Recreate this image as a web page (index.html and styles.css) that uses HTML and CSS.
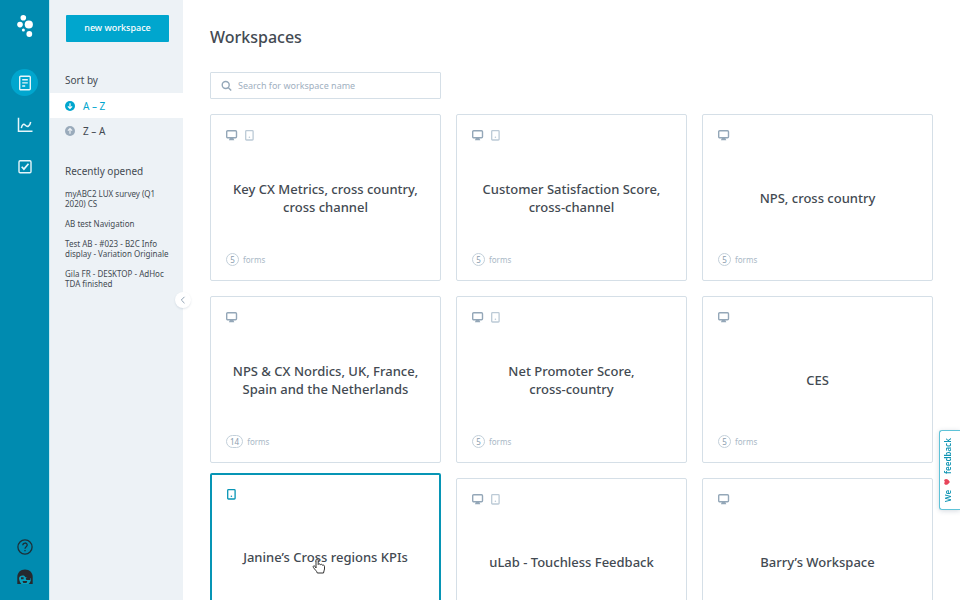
FILE: index.html
```html
<!DOCTYPE html>
<html lang="en">
<head>
  <meta charset="UTF-8" />
  <meta name="viewport" content="width=device-width, initial-scale=1" />
  <title>Workspaces</title>
  <link rel="stylesheet" href="styles.css">
</head>
<body>
  <!-- shared icons -->
  <svg class="sprite" aria-hidden="true">
    <symbol id="desktop" viewBox="0 0 12 12">
      <rect x=".7" y="1.7" width="9.8" height="7" rx="1" fill="none" stroke="currentColor" stroke-width="1.4" />
      <path d="M4 8.7h3.200l1.100 2.500H2.900z" fill="currentColor" />
    </symbol>
    <symbol id="mobile" viewBox="0 0 12 12">
      <rect x="1.7" y="1.6" width="7.4" height="9.4" rx=".8" fill="none" stroke="currentColor" stroke-width="1.3" />
      <circle cx="5.4" cy="8.3" r=".8" fill="currentColor" />
    </symbol>
  </svg>

  <div class="app">
    <nav class="rail" aria-label="Main">
      <a href="#" class="logo" aria-label="Home">
        <svg width="18" height="24" viewBox="0 0 18 24" fill="#fff">
          <circle cx="7.3" cy="3.8" r="2.8" />
          <circle cx="4" cy="10.6" r="2.8" />
          <circle cx="12.8" cy="10.5" r="4.1" />
          <circle cx="7.4" cy="16" r="1.5" />
          <circle cx="13.3" cy="20" r="2.9" />
        </svg>
      </a>
      <div class="rail-links">
        <a href="#" class="rail-link active" aria-label="Workspaces">
          <svg width="16" height="16" viewBox="0 0 16 16" fill="none" stroke="currentColor" stroke-width="1.4">
            <rect x="2.7" y="1.2" width="10.6" height="13.6" rx="1" />
            <path d="M5.2 4.7h5.6M5.2 7.9h5.6M5.2 11h3" />
          </svg>
        </a>
        <a href="#" class="rail-link" aria-label="Analytics">
          <svg width="16" height="16" viewBox="0 0 16 16" fill="none" stroke="currentColor" stroke-width="1.5">
            <path d="M1.5 .8v13.5H15.5" />
            <path d="M4.3 11.2C5.2 6.6 7 6.8 8.4 8.3c1.8 1.8 4.3 1.7 5.3-3.3" />
          </svg>
        </a>
        <a href="#" class="rail-link" aria-label="Tasks">
          <svg width="16" height="16" viewBox="0 0 16 16" fill="none" stroke="currentColor">
            <rect x="2" y="1.7" width="12" height="12" rx="1.2" stroke-width="1.4" />
            <path d="M4.7 7.7l2.2 2.4 4.6-5.4" stroke-width="1.7" />
          </svg>
        </a>
      </div>
      <div class="rail-bottom">
        <a href="#" aria-label="Help">
          <svg width="16" height="16" viewBox="0 0 16 16" fill="none" stroke="#1d2f38" stroke-width="1.3">
            <circle cx="8" cy="8" r="7.1" />
            <path d="M5.8 6.3c0-3 4.4-3 4.4-.2 0 1.6-2.2 1.6-2.2 3.6" />
            <path d="M8 10.9v1.4" />
          </svg>
        </a>
        <a href="#" aria-label="Profile">
          <svg width="16" height="16" viewBox="0 0 16 16">
            <path d="M.3 15V8C.3 3.5 3.5.5 8 .5s7.700 3 7.700 7.500v7z" fill="#26292e" />
            <path d="M2 9.300c.5-2.300 2.300-3.300 5.300-2.600.8 2 3.400 2.600 6.700 2.600.2 2.500-1 4.500-2.500 5.700h-7C2.800 13.500 2.200 11.500 2 9.300z" fill="#0aa0bd" />
            <path d="M4 8.300h2.600v1.900H4zM8.800 9h4.600v1.900H9.300zM5.500 12h4.800l-.8 2H6.300z" fill="#26292e" />
          </svg>
        </a>
      </div>
    </nav>

    <aside class="sidebar">
      <button type="button" class="new-workspace">new workspace</button>

      <h2>Sort by</h2>
      <ul class="sort">
        <li>
          <a href="#" class="selected">
            <svg width="10" height="10" viewBox="0 0 10 10">
              <circle cx="5" cy="5" r="5" fill="currentColor" />
              <path d="M5 2.3v5M2.9 5.3L5 7.4l2.1-2.1" fill="none" stroke="#fff" stroke-width="1.2" />
            </svg>
            A – Z
          </a>
        </li>
        <li>
          <a href="#">
            <svg width="10" height="10" viewBox="0 0 10 10">
              <circle cx="5" cy="5" r="5" fill="#9aabbb" />
              <path d="M5 7.7v-5M2.9 4.7L5 2.6l2.1 2.1" fill="none" stroke="#edf2f6" stroke-width="1.2" />
            </svg>
            Z – A
          </a>
        </li>
      </ul>

      <h2>Recently opened</h2>
      <ul class="recent">
        <li><a href="#">myABC2 LUX survey (Q1 2020) CS</a></li>
        <li><a href="#">AB test Navigation</a></li>
        <li><a href="#">Test AB - #023 - B2C Info display - Variation Originale</a></li>
        <li><a href="#">Gila FR - DESKTOP - AdHoc TDA finished</a></li>
      </ul>

      <button type="button" class="collapse" aria-label="Collapse sidebar">
        <svg width="8" height="8" viewBox="0 0 8 8" fill="none" stroke="#8fa1b3">
          <path d="M5.5 .8L2.3 4l3.2 3.2" />
        </svg>
      </button>
    </aside>

    <main class="content">
      <h1>Workspaces</h1>

      <label class="search">
        <svg width="12" height="12" viewBox="0 0 12 12" fill="none" stroke="currentColor" stroke-width="1.4">
          <circle cx="4.7" cy="5" r="3.5" />
          <path d="M7.2 7.5l3 3" />
        </svg>
        <input type="search" placeholder="Search for workspace name" aria-label="Search for workspace name" />
      </label>

      <div class="grid">
        <a href="#" class="card">
          <div class="devices"><svg><use href="#desktop" /></svg><svg class="light"><use href="#mobile" /></svg></div>
          <h3>Key CX Metrics, cross country, cross channel</h3>
          <div class="forms"><span>5</span> forms</div>
        </a>
        <a href="#" class="card">
          <div class="devices"><svg><use href="#desktop" /></svg><svg class="light"><use href="#mobile" /></svg></div>
          <h3>Customer Satisfaction Score, cross-channel</h3>
          <div class="forms"><span>5</span> forms</div>
        </a>
        <a href="#" class="card">
          <div class="devices"><svg><use href="#desktop" /></svg></div>
          <h3>NPS, cross country</h3>
          <div class="forms"><span>5</span> forms</div>
        </a>
        <a href="#" class="card">
          <div class="devices"><svg><use href="#desktop" /></svg></div>
          <h3>NPS &amp; CX Nordics, UK, France, Spain and the Netherlands</h3>
          <div class="forms"><span>14</span> forms</div>
        </a>
        <a href="#" class="card">
          <div class="devices"><svg><use href="#desktop" /></svg><svg class="light"><use href="#mobile" /></svg></div>
          <h3>Net Promoter Score,<br>cross-country</h3>
          <div class="forms"><span>5</span> forms</div>
        </a>
        <a href="#" class="card">
          <div class="devices"><svg><use href="#desktop" /></svg></div>
          <h3>CES</h3>
          <div class="forms"><span>5</span> forms</div>
        </a>
        <a href="#" class="card hovered">
          <div class="devices"><svg><use href="#mobile" /></svg></div>
          <h3>Janine’s Cross regions KPIs</h3>
          <div class="forms"></div>
          <svg class="cursor" width="14" height="16" viewBox="0 0 14 16" fill="#fff" stroke="#333" stroke-linejoin="round">
            <path d="M4 10V2.2C4 .5 6.2.5 6.2 2.2V6.5C6.5 5.5 8.3 5.6 8.4 6.8 8.9 6 10.4 6.2 10.5 7.3 11.2 6.8 12.5 7.2 12.5 8.3V11c0 1.5-1 2.3-1 4H5.3C5 13.2 2.7 11.6 1.3 9.3.6 8 2.2 7.3 3 8.4z" />
          </svg>
        </a>
        <a href="#" class="card">
          <div class="devices"><svg><use href="#desktop" /></svg><svg class="light"><use href="#mobile" /></svg></div>
          <h3>uLab - Touchless Feedback</h3>
          <div class="forms"></div>
        </a>
        <a href="#" class="card">
          <div class="devices"><svg><use href="#desktop" /></svg></div>
          <h3>Barry’s Workspace</h3>
          <div class="forms"></div>
        </a>
      </div>
    </main>
  </div>

  <button type="button" class="feedback">
    <span>
      We
      <svg width="6" height="6" viewBox="0 0 6 6"><path d="M.1 3C3-1.5 5.8.3 5.8 1.7 5.8 2.5 5.1 3 4.8 3 5.1 3 5.8 3.5 5.8 4.3 5.8 5.7 3 7.5.1 3z" fill="#e8455a" /></svg>
      feedback
    </span>
  </button>
</body>
</html>
```
FILE: styles.css
```css
* {
  box-sizing: border-box;
}

body {
  margin: 0;
  font-family: "Noto Sans", "Open Sans", sans-serif;
  color: #434a52;
  background: #fff;
}

h1, h2, h3, ul {
  margin: 0;
  padding: 0;
}

ul {
  list-style: none;
}

a {
  color: inherit;
  text-decoration: none;
}

button {
  font-family: inherit;
  cursor: pointer;
}

svg {
  display: block;
  flex: none;
}

.sprite {
  position: absolute;
  width: 0;
  height: 0;
}

.app {
  display: flex;
  height: 100vh;
}

/* left rail */
.rail {
  flex: none;
  display: flex;
  flex-direction: column;
  align-items: center;
  width: 50px;
  padding: 14px 0 15px;
  background: #008bb0;
  border-right: 1px solid #c5eaf2;
}

.rail-links {
  display: flex;
  flex-direction: column;
  gap: 15px;
  margin-top: 31px;
}

.rail-link {
  display: flex;
  align-items: center;
  justify-content: center;
  width: 27px;
  height: 27px;
  border-radius: 50%;
  color: #e6f6fa;
}

.rail-link.active {
  background: #00a6ce;
}

.rail-bottom {
  display: flex;
  flex-direction: column;
  gap: 14px;
  margin-top: auto;
}

/* sidebar */
.sidebar {
  position: relative;
  flex: none;
  width: 133px;
  padding: 15px 0;
  background: #edf2f6;
}

.new-workspace {
  display: block;
  width: 103px;
  height: 27px;
  margin: 0 0 30px 16px;
  padding: 0 0 2px;
  border: 0;
  border-radius: 1px;
  background: #00a6ce;
  color: #fff;
  font-size: 9px;
  font-weight: 500;
}

.sidebar h2 {
  padding: 0 15px;
  font-size: 10px;
  line-height: 16px;
  font-weight: 400;
}

.sort {
  margin: 5px 0 20px;
}

.sort a {
  display: flex;
  align-items: center;
  gap: 8px;
  height: 25px;
  padding: 0 15px;
  font-size: 10px;
}

.sort .selected {
  background: #fff;
  color: #00a6ce;
}

.recent {
  display: flex;
  flex-direction: column;
  gap: 10px;
  padding: 10px 10px 0 15px;
  font-size: 8px;
  line-height: 10px;
}

.recent a {
  display: block;
}

.collapse {
  position: absolute;
  top: 50%;
  right: -8px;
  display: flex;
  align-items: center;
  justify-content: center;
  width: 16px;
  height: 16px;
  margin-top: -8px;
  padding: 0;
  border: 0;
  border-radius: 50%;
  background: #fff;
  box-shadow: 0 1px 2px rgba(60, 90, 120, 0.15);
}

/* content */
.content {
  flex: 1;
  min-width: 0;
  padding: 25px 27px;
  overflow-y: auto;
  scrollbar-width: none;
}

h1 {
  font-size: 16px;
  line-height: 24px;
  font-weight: 500;
}

.search {
  display: flex;
  align-items: center;
  gap: 5px;
  width: calc((100% - 30px) / 3);
  height: 27px;
  margin: 23px 0 15px;
  padding: 0 10px;
  border: 1px solid #d5dfe7;
  border-radius: 1px;
  color: #94a7b8;
}

.search input {
  flex: 1;
  min-width: 0;
  padding: 0;
  border: 0;
  outline: 0;
  background: none;
  font-family: inherit;
  font-size: 9px;
}

.search input::placeholder {
  color: #9fb0bf;
}

.grid {
  display: grid;
  grid-template-columns: repeat(3, 1fr);
  gap: 15px;
}

.card {
  position: relative;
  display: flex;
  flex-direction: column;
  min-height: 167px;
  padding: 14px 15px;
  border: 1px solid #d5dfe7;
  border-radius: 2px;
  background: #fff;
}

.card.hovered {
  border: 2px solid #0795b5;
  padding: 13px 14px;
  transform: translateY(-5px);
}

.devices {
  display: flex;
  gap: 6px;
  margin-bottom: 2px;
  color: #94a7b8;
}

.devices svg {
  width: 12px;
  height: 12px;
}

.devices .light {
  color: #bccad6;
}

.hovered .devices {
  color: #0795b5;
}

.card h3 {
  flex: 1;
  display: flex;
  align-items: center;
  justify-content: center;
  font-size: 13px;
  line-height: 18px;
  font-weight: 500;
  text-align: center;
}

.forms {
  display: flex;
  align-items: center;
  gap: 4px;
  min-height: 13px;
  font-size: 8px;
  line-height: 13px;
  color: #a9b8c6;
}

.forms span {
  min-width: 13px;
  padding: 0 3px;
  border: 1px solid #c3d0da;
  border-radius: 7px;
  line-height: 11px;
  text-align: center;
  color: #8a9cad;
}

.cursor {
  position: absolute;
  top: 83px;
  left: 100px;
}

.feedback {
  position: fixed;
  right: 0;
  top: 430px;
  display: flex;
  align-items: center;
  justify-content: center;
  width: 21px;
  height: 80px;
  padding: 0 6px 0 0;
  border: 1px solid #5fc3d8;
  border-right: 0;
  border-radius: 3px 0 0 3px;
  background: #fff;
  box-shadow: 0 1px 5px rgba(40, 70, 100, 0.2);
  color: #0f94b3;
  font-size: 8px;
  font-weight: 600;
}

/* reads from bottom to top */
.feedback span {
  display: flex;
  align-items: center;
  gap: 5px;
  writing-mode: vertical-rl;
  transform: rotate(180deg);
}
```
